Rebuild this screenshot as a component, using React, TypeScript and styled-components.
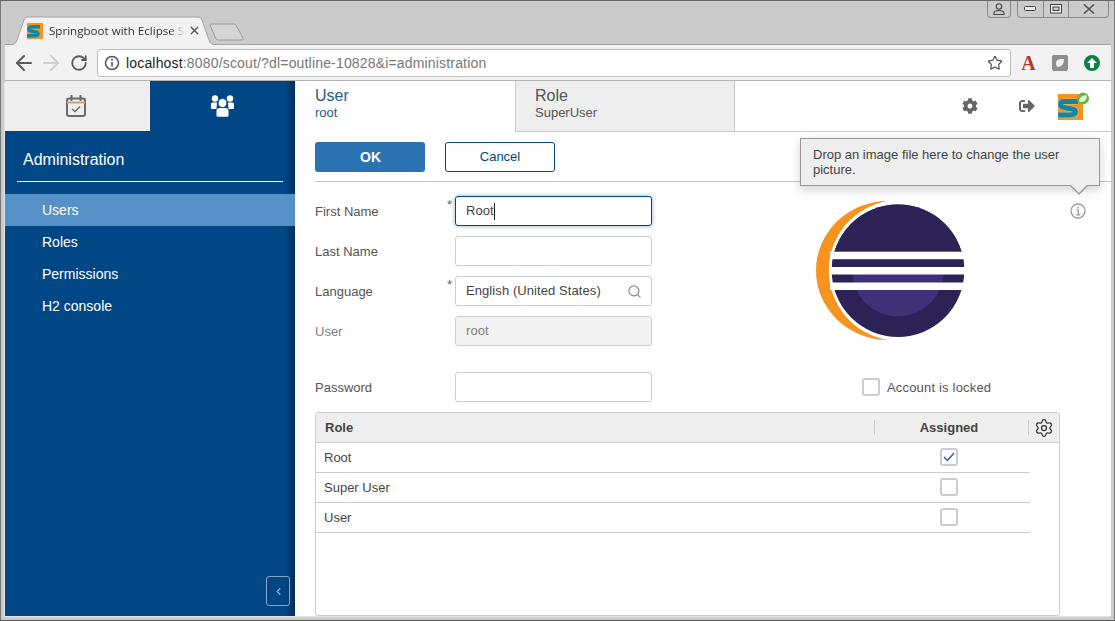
import React from "react";
import styled, { createGlobalStyle } from "styled-components";
import { ArrowLeft, ArrowRight, RotateCw, Search, Settings, Star, X, ChevronLeft } from "lucide-react";
import { FaCog, FaSignOutAlt } from "react-icons/fa";

const GlobalStyle = createGlobalStyle`
  html, body {
    margin: 0;
    padding: 0;
    height: 100%;
    overflow: hidden;
    background: #cbcbcb;
  }
  body {
    font-family: "Liberation Sans", Arial, sans-serif;
    font-size: 13px;
    color: #444;
  }
  * { box-sizing: border-box; }
`;

const SiteLogo = ({ size }: { size: number }) => (
  <svg width={size} height={size} viewBox="0 0 16 16">
    <rect width="16" height="16" fill="#f7941e" />
    <path d="M13 3.800H5C2.800 3.800 1.800 4.700 1.800 6 1.800 7.500 3 8 5 8.300 8.500 8.800 11 9 11 10.600 11 12 9.500 12.700 7.500 12.700H0" fill="none" stroke="#0d86a8" strokeWidth="3.500" />
  </svg>
);

const HeaderLogo = () => (
  <svg width="31" height="29" viewBox="0 0 31 29">
    <rect y="2" width="25" height="26" fill="#f7941e" />
    <path d="M20 9.500H7C3.500 9.500 2.500 10.800 2.500 12.400 2.500 14.500 4.500 15.200 8 15.800 13.500 16.700 17.500 17.200 17.500 19.800 17.500 22 15 23 12 23H0" fill="none" stroke="#fff" strokeWidth="6" opacity=".3" />
    <path d="M20 9.500H7C3.500 9.500 2.500 10.800 2.500 12.400 2.500 14.500 4.500 15.200 8 15.800 13.500 16.700 17.500 17.200 17.500 19.800 17.500 22 15 23 12 23H0" fill="none" stroke="#0d86a8" strokeWidth="5" />
    <circle cx="25" cy="6.500" r="6" fill="#6db33f" />
    <path d="M21.500 10C20.500 6 24 3 28.800 3.200 29 7.500 26 10.800 21.500 10Z" fill="#e6f2da" />
  </svg>
);

const CalendarIcon = () => (
  <svg width="20" height="22" viewBox="0 0 20 22" fill="none" stroke="#6b6b6b">
    <rect x="1" y="3.500" width="18" height="17.500" rx="2" strokeWidth="2" />
    <path d="M1 7.500H19" strokeWidth="2" stroke="#c8a880" />
    <path d="M5.500 1v4M14.500 1v4" strokeWidth="2.200" strokeLinecap="round" />
    <path d="M6 14l3 2.500L14 11.500" strokeWidth="1.400" />
  </svg>
);

const UsersIcon = () => (
  <svg width="23" height="22" viewBox="0 0 23 22" fill="#fff">
    <circle cx="4" cy="3.500" r="3.200" />
    <circle cx="19" cy="3.500" r="3.200" />
    <path d="M0 9C0 8 1 7.500 2 7.500H6L5.500 14H1C.4 14 0 13.500 0 13Z" />
    <path d="M23 9C23 8 22 7.500 21 7.500H17L17.500 14H22C22.600 14 23 13.500 23 13Z" />
    <circle cx="11.500" cy="8" r="4.500" stroke="#014786" strokeWidth="1" />
    <path d="M5.500 15.500C5.500 14 7 13 8.500 13H14.500C16 13 17.500 14 17.500 15.500V20.500C17.500 21.300 17 21.700 16 21.700H7C6 21.700 5.500 21.300 5.500 20.500Z" />
  </svg>
);

const EclipseLogo = () => (
  <svg width="152" height="142" viewBox="0 0 152 142">
    <defs>
      <clipPath id="eclipse-disc">
        <circle cx="83" cy="70.700" r="66.300" />
      </clipPath>
    </defs>
    <path d="M73 1A72 69.500 0 0 0 73 140A70.400 70.400 0 0 1 73 1Z" fill="#f7941e" />
    <circle cx="83" cy="70.700" r="66.300" fill="#2c2255" />
    <g clipPath="url(#eclipse-disc)">
      <circle cx="83" cy="71" r="45.500" fill="#3f3178" />
      <rect x="0" y="0" width="152" height="74" fill="#2c2255" />
    </g>
    <rect x="15" y="51.700" width="136" height="7.500" fill="#fff" />
    <rect x="15" y="67" width="136" height="7.500" fill="#fff" />
    <rect x="15" y="82.500" width="136" height="7.500" fill="#fff" />
  </svg>
);

const InfoIcon = () => (
  <svg width="16" height="16" viewBox="0 0 16 16" fill="none" stroke="#999">
    <circle cx="8" cy="8" r="7" strokeWidth="1.300" />
    <path d="M6.200 7H8.300V11.600M6 11.800H10.400" strokeWidth="1.200" />
    <circle cx="8" cy="4.700" r=".9" fill="#999" stroke="none" />
  </svg>
);

const PageInfoIcon = () => (
  <svg width="16" height="16" viewBox="0 0 16 16" fill="none" stroke="#555">
    <circle cx="8" cy="8" r="6.500" strokeWidth="1.500" />
    <path d="M8 7V11.500" strokeWidth="1.600" />
    <circle cx="8" cy="4.800" r="1" fill="#555" stroke="none" />
  </svg>
);

const App = () => {
  return (
    <>
      <GlobalStyle />
      <Window>
        <TitleBar>
          <ActiveTab>
            <TabShape width="206" height="29" viewBox="0 0 206 29">
              <path d="M0 29C4 29 6 27 7 24L14 4C15 1.500 16 1 19 1H187C190 1 191 1.500 192 4L199 24C200 27 202 29 206 29" fill="#f2f2f2" stroke="#a3a3a3" />
            </TabShape>
            <SiteLogo size={16} />
            <TabTitle>Springboot with Eclipse S</TabTitle>
            <X size={13} color="#555" strokeWidth={2.6} />
          </ActiveTab>
          <NewTab>
            <svg width="36" height="18" viewBox="0 0 36 18">
              <path d="M1 2C1 1.500 1.500 1 2 1H25C26 1 26.500 1.500 27 2L34 15C34.500 16.500 34 17 33 17H9C8 17 7.500 16.500 7 16Z" fill="#d4d4d4" stroke="#9a9a9a" />
            </svg>
          </NewTab>
          <WindowControls>
            <ProfileButton>
              <svg width="12" height="12" viewBox="0 0 12 12" fill="none" stroke="#444" strokeWidth="1.100">
                <circle cx="6" cy="3.500" r="2.700" />
                <path d="M1 11.500V10C1 8.500 3 7.500 6 7.500S11 8.500 11 10V11.500Z" />
              </svg>
            </ProfileButton>
            <ControlGroup>
              <ControlButton $width={25}>
                <svg width="13" height="6" viewBox="0 0 13 6" fill="#eee" stroke="#444">
                  <rect x=".5" y=".5" width="11" height="4" rx="1" />
                </svg>
              </ControlButton>
              <ControlButton $width={25}>
                <svg width="12" height="10" viewBox="0 0 12 10" fill="#eee" stroke="#444">
                  <rect x=".5" y=".5" width="11" height="8.500" />
                  <rect x="3" y="3" width="6" height="3.500" fill="#ccc" />
                </svg>
              </ControlButton>
              <ControlButton $width={40}>
                <svg width="12" height="10" viewBox="0 0 12 10" fill="none" stroke="#555" strokeWidth="1.600">
                  <path d="M1 .5L11 9.500M11 .5L1 9.500" />
                </svg>
              </ControlButton>
            </ControlGroup>
          </WindowControls>
        </TitleBar>

        <Toolbar>
          <ArrowLeft size={24} color="#5a5a5a" strokeWidth={2} />
          <ArrowRight size={24} color="#cfcfcf" strokeWidth={2} />
          <ReloadIcon size={18} color="#5a5a5a" strokeWidth={2.4} />
          <AddressBar>
            <PageInfoIcon />
            <Url>
              <b>localhost</b>:8080/scout/?dl=outline-10828&amp;i=administration
            </Url>
            <Star size={16} color="#555" strokeWidth={1.8} />
          </AddressBar>
          <Extensions>
            <AcrobatGlyph>A</AcrobatGlyph>
            <ShieldTile>
              <svg width="10" height="10" viewBox="0 0 10 10">
                <path d="M1 5C1 2 4 .5 9 1 9 5 7 9 3 9 1.500 9 1 7 1 5Z" fill="#f2f2f2" />
              </svg>
            </ShieldTile>
            <UpdateBadge>
              <svg width="10" height="10" viewBox="0 0 10 10">
                <path d="M5 0L10 5H7V10H3V5H0Z" fill="#fff" />
              </svg>
            </UpdateBadge>
          </Extensions>
        </Toolbar>

        <AppArea>
          <Sidebar>
            <SideTabs>
              <SideTab>
                <CalendarIcon />
              </SideTab>
              <SideTab $active>
                <UsersIcon />
              </SideTab>
            </SideTabs>
            <SideTitle>Administration</SideTitle>
            <SideMenu>
              <SideItem $selected>Users</SideItem>
              <SideItem>Roles</SideItem>
              <SideItem>Permissions</SideItem>
              <SideItem>H2 console</SideItem>
            </SideMenu>
            <SideFooter>
              <CollapseButton>
                <ChevronLeft size={11} color="#7fb4dc" strokeWidth={3} />
              </CollapseButton>
            </SideFooter>
          </Sidebar>

          <Main>
            <ViewTabs>
              <ViewTab $active>
                <ViewTabTitle>User</ViewTabTitle>
                <ViewTabSub>root</ViewTabSub>
              </ViewTab>
              <ViewTab>
                <ViewTabTitle>Role</ViewTabTitle>
                <ViewTabSub>SuperUser</ViewTabSub>
              </ViewTab>
              <HeaderTools>
                <FaCog size={16} color="#666" />
                <FaSignOutAlt size={16} color="#666" />
                <HeaderLogo />
              </HeaderTools>
            </ViewTabs>

            <Content>
              <ButtonBar>
                <PrimaryButton>OK</PrimaryButton>
                <SecondaryButton>Cancel</SecondaryButton>
              </ButtonBar>

              <FormArea>
                <FieldColumn>
                  <FieldRow>
                    <FieldLabel $mandatory>First Name</FieldLabel>
                    <TextInput $focused>
                      Root
                      <Caret />
                    </TextInput>
                  </FieldRow>
                  <FieldRow>
                    <FieldLabel>Last Name</FieldLabel>
                    <TextInput />
                  </FieldRow>
                  <FieldRow>
                    <FieldLabel $mandatory>Language</FieldLabel>
                    <TextInput>
                      English (United States)
                      <SearchSlot>
                        <Search size={15} color="#888" strokeWidth={2} />
                      </SearchSlot>
                    </TextInput>
                  </FieldRow>
                  <FieldRow>
                    <FieldLabel $muted>User</FieldLabel>
                    <TextInput $disabled>root</TextInput>
                  </FieldRow>
                  <PasswordRow>
                    <FieldLabel>Password</FieldLabel>
                    <TextInput />
                  </PasswordRow>
                </FieldColumn>

                <PictureColumn>
                  <PictureRow>
                    <EclipseLogo />
                    <InfoSlot>
                      <InfoIcon />
                    </InfoSlot>
                  </PictureRow>
                  <LockedRow>
                    <CheckBox />
                    <span>Account is locked</span>
                  </LockedRow>
                </PictureColumn>
              </FormArea>

              <RoleTable>
                <TableHeader>
                  <RoleHeaderCell>Role</RoleHeaderCell>
                  <AssignedHeaderCell>Assigned</AssignedHeaderCell>
                  <TableMenuCell>
                    <Settings size={20} color="#333" strokeWidth={1.5} />
                  </TableMenuCell>
                </TableHeader>
                <TableRow>
                  <RoleCell>Root</RoleCell>
                  <AssignedCell>
                    <CheckBox>
                      <svg width="12" height="10" viewBox="0 0 12 10" fill="none" stroke="#2d5f96" strokeWidth="1.500">
                        <path d="M1 5L4.500 8.500 11 1" />
                      </svg>
                    </CheckBox>
                  </AssignedCell>
                </TableRow>
                <TableRow>
                  <RoleCell>Super User</RoleCell>
                  <AssignedCell>
                    <CheckBox />
                  </AssignedCell>
                </TableRow>
                <TableRow>
                  <RoleCell>User</RoleCell>
                  <AssignedCell>
                    <CheckBox />
                  </AssignedCell>
                </TableRow>
              </RoleTable>
            </Content>

            <Tooltip>Drop an image file here to change the user picture.</Tooltip>
          </Main>
        </AppArea>
      </Window>
    </>
  );
};

export default App;

const Window = styled.div`
  width: 1115px;
  height: 621px;
  display: flex;
  flex-direction: column;
  padding: 0 3px 4px 4px;
  background: #cbcbcb;
  border: 1px solid #555;
  border-color: #666 #777 #555 #777;
  overflow: hidden;
`;

const TitleBar = styled.div`
  position: relative;
  height: 43px;
  flex: none;
  display: flex;
  align-items: flex-end;
  padding-left: 5px;
`;

const ActiveTab = styled.div`
  position: relative;
  width: 206px;
  height: 29px;
  display: flex;
  align-items: center;
  padding: 0 15px 0 17px;
  gap: 6px;
  z-index: 1;
  margin-bottom: -1px;

  > svg:not(:first-child) {
    position: relative;
    flex: none;
  }
`;

const TabShape = styled.svg`
  position: absolute;
  left: 0;
  top: 0;
`;

const TabTitle = styled.span`
  position: relative;
  flex: 1;
  min-width: 0;
  margin-right: -4px;
  white-space: nowrap;
  font-family: "Open Sans", "Noto Sans", sans-serif;
  font-size: 11.6px;
  color: #333;
  -webkit-mask-image: linear-gradient(to right, #000 88%, transparent 99%);
  mask-image: linear-gradient(to right, #000 88%, transparent 99%);
`;

const NewTab = styled.div`
  margin-left: -7px;
  margin-bottom: 3px;
  height: 18px;
  display: flex;
`;

const WindowControls = styled.div`
  position: absolute;
  top: 0;
  right: 2px;
  display: flex;
  gap: 6px;
`;

const ProfileButton = styled.div`
  width: 24px;
  height: 17px;
  display: flex;
  align-items: center;
  justify-content: center;
  border: 1px solid #8a8a8a;
  border-top: none;
  border-radius: 0 0 4px 4px;
`;

const ControlGroup = styled.div`
  height: 17px;
  display: flex;
  border: 1px solid #8a8a8a;
  border-top: none;
  border-radius: 0 0 4px 4px;
`;

const ControlButton = styled.div<{ $width: number }>`
  width: ${({ $width }) => $width}px;
  display: flex;
  align-items: center;
  justify-content: center;

  & + & {
    border-left: 1px solid #8a8a8a;
  }
`;

const Toolbar = styled.div`
  height: 37px;
  flex: none;
  display: flex;
  align-items: center;
  background: #f2f2f2;
  border-top: 1px solid #a3a3a3;
  border-bottom: 1px solid #b3b3b3;
  padding: 0 5px 0 7px;
  gap: 3px;
`;

const ReloadIcon = styled(RotateCw)`
  margin: 0 6px 0 4px;
  flex: none;
`;

const AddressBar = styled.div`
  flex: 1;
  height: 28px;
  display: flex;
  align-items: center;
  gap: 6px;
  padding: 0 7px 0 6px;
  background: #fff;
  border: 1px solid #bdbdbd;
  border-radius: 3px;
`;

const Url = styled.div`
  flex: 1;
  font-size: 14px;
  letter-spacing: 0.17px;
  color: #777;
  white-space: nowrap;

  b {
    font-weight: normal;
    color: #222;
  }
`;

const Extensions = styled.div`
  display: flex;
  align-items: center;
  gap: 16px;
  margin-left: 6px;
  margin-right: 6px;
`;

const AcrobatGlyph = styled.span`
  width: 17px;
  margin-right: -1px;
  text-align: center;
  font-family: "Liberation Serif", serif;
  font-weight: bold;
  font-size: 20px;
  line-height: 20px;
  color: #b03a2a;
`;

const ShieldTile = styled.div`
  width: 16px;
  height: 16px;
  display: flex;
  align-items: center;
  justify-content: center;
  border-radius: 2px;
  background: #8e8e8e;
`;

const UpdateBadge = styled.div`
  width: 16px;
  height: 16px;
  display: flex;
  align-items: center;
  justify-content: center;
  border-radius: 50%;
  background: #0b8043;
`;

const AppArea = styled.div`
  flex: 1;
  min-height: 0;
  display: flex;
  background: #fff;
  box-shadow: -1px 1px 0 #e8e8e8;
`;

const Sidebar = styled.div`
  position: relative;
  width: 290px;
  flex: none;
  display: flex;
  flex-direction: column;
  background: linear-gradient(to right, #014786 96.5%, #012d55 100%);
`;

const SideTabs = styled.div`
  height: 50px;
  flex: none;
  display: flex;
`;

const SideTab = styled.div<{ $active?: boolean }>`
  width: 145px;
  display: flex;
  align-items: center;
  justify-content: center;
  padding-right: ${({ $active }) => ($active ? "0" : "3px")};
  background: ${({ $active }) => ($active ? "transparent" : "#eeeeee")};
`;

const SideTitle = styled.div`
  margin: 0 12px;
  height: 51px;
  padding: 20px 6px 0;
  font-size: 16px;
  color: #fff;
  border-bottom: 1px solid #fff;
`;

const SideMenu = styled.div`
  margin-top: 12px;
  display: flex;
  flex-direction: column;
`;

const SideItem = styled.div<{ $selected?: boolean }>`
  height: 32px;
  line-height: 32px;
  padding-left: 37px;
  font-size: 14px;
  color: #fff;
  background: ${({ $selected }) => ($selected ? "#5591c7" : "transparent")};
`;

const SideFooter = styled.div`
  margin-top: auto;
  display: flex;
  justify-content: flex-end;
  padding: 0 5px 10px 0;
`;

const CollapseButton = styled.div`
  width: 24px;
  height: 30px;
  display: flex;
  align-items: center;
  justify-content: center;
  border: 1px solid #8ba6c4;
  border-radius: 3px;
`;

const Main = styled.div`
  position: relative;
  flex: 1;
  min-width: 0;
  display: flex;
  flex-direction: column;
`;

const ViewTabs = styled.div`
  height: 51px;
  flex: none;
  display: flex;
`;

const ViewTab = styled.div<{ $active?: boolean }>`
  width: 220px;
  padding: 6px 20px 0;
  padding-left: ${({ $active }) => ($active ? "20px" : "19px")};
  color: ${({ $active }) => ($active ? "#245a8c" : "#555")};
  background: ${({ $active }) => ($active ? "#fff" : "#eeeeee")};
  border-bottom: 1px solid ${({ $active }) => ($active ? "transparent" : "#c8c8c8")};
  border-left: ${({ $active }) => ($active ? "none" : "1px solid #c8c8c8")};
  border-right: ${({ $active }) => ($active ? "none" : "1px solid #c8c8c8")};
`;

const ViewTabTitle = styled.div`
  font-size: 16px;
  line-height: 17px;
`;

const ViewTabSub = styled.div`
  font-size: 13px;
  line-height: 18px;
`;

const HeaderTools = styled.div`
  flex: 1;
  display: flex;
  align-items: center;
  justify-content: flex-end;
  gap: 41px;
  padding-right: 22px;
  border-bottom: 1px solid #c8c8c8;

  > svg:last-child {
    margin-left: -18px;
  }
`;

const Content = styled.div`
  flex: 1;
  min-height: 0;
  display: flex;
  flex-direction: column;
  padding-left: 20px;
`;

const ButtonBar = styled.div`
  height: 50px;
  flex: none;
  display: flex;
  gap: 20px;
  padding-top: 10px;
  border-bottom: 1px solid #c8c8c8;
`;

const PrimaryButton = styled.div`
  width: 110px;
  height: 30px;
  line-height: 30px;
  padding-left: 1px;
  text-align: center;
  border-radius: 3px;
  font-size: 14px;
  font-weight: bold;
  color: #fff;
  background: #2b72b2;
`;

const SecondaryButton = styled.div`
  width: 110px;
  height: 30px;
  line-height: 28px;
  text-align: center;
  border: 1px solid #014786;
  border-radius: 3px;
  font-size: 13px;
  color: #014786;
  background: #fff;
`;

const FormArea = styled.div`
  display: flex;
  padding-top: 14px;
  height: 230px;
  flex: none;
`;

const FieldColumn = styled.div`
  width: 337px;
  flex: none;
  display: flex;
  flex-direction: column;
  gap: 10px;
`;

const FieldRow = styled.div`
  display: flex;
  align-items: center;
  height: 30px;
`;

const PasswordRow = styled(FieldRow)`
  margin-top: 16px;
`;

const FieldLabel = styled.label<{ $mandatory?: boolean; $muted?: boolean }>`
  position: relative;
  width: 140px;
  flex: none;
  font-size: 13px;
  color: ${({ $muted }) => ($muted ? "#808080" : "#555")};

  &::after {
    content: ${({ $mandatory }) => ($mandatory ? '"*"' : "none")};
    position: absolute;
    top: -7px;
    right: 3px;
    font-size: 13px;
    color: #666;
  }
`;

const TextInput = styled.div<{ $focused?: boolean; $disabled?: boolean }>`
  position: relative;
  width: 197px;
  height: 30px;
  line-height: 28px;
  padding: 0 10px;
  display: flex;
  align-items: center;
  font-size: 13px;
  letter-spacing: 0.08px;
  color: ${({ $disabled }) => ($disabled ? "#808080" : "#444")};
  background: ${({ $disabled }) => ($disabled ? "#f2f2f2" : "#fff")};
  border: 1px solid ${({ $focused }) => ($focused ? "#014786" : "#cccccc")};
  border-radius: 3px;
  box-shadow: ${({ $focused }) => ($focused ? "0 0 4px rgba(1, 71, 134, 0.45)" : "none")};
`;

const Caret = styled.span`
  width: 1px;
  height: 17px;
  background: #222;
`;

const SearchSlot = styled.span`
  margin-left: auto;
  margin-right: -1px;
  display: flex;
`;

const PictureColumn = styled.div`
  flex: 1;
  display: flex;
  flex-direction: column;
`;

const PictureRow = styled.div`
  display: flex;
  justify-content: space-between;
  align-items: flex-start;
  padding: 4px 25px 0 163px;
`;

const InfoSlot = styled.div`
  display: flex;
  margin-top: 3px;
`;

const LockedRow = styled.div`
  display: flex;
  align-items: center;
  gap: 7px;
  margin: 36px 0 0 210px;
  font-size: 13px;
  letter-spacing: 0.18px;
  color: #555;
`;

const CheckBox = styled.div`
  width: 18px;
  height: 18px;
  flex: none;
  display: flex;
  align-items: center;
  justify-content: center;
  background: #fff;
  border: 2px solid #cccccc;
  border-radius: 3px;
`;

const RoleTable = styled.div`
  flex: 1;
  width: 745px;
  min-height: 0;
  border: 1px solid #cccccc;
  border-radius: 3px;
`;

const TableHeader = styled.div`
  height: 30px;
  display: flex;
  align-items: center;
  background: #eeeeee;
  border-bottom: 1px solid #cccccc;
  font-size: 13px;
  font-weight: bold;
  color: #444;
`;

const RoleHeaderCell = styled.div`
  width: 559px;
  padding-left: 9px;
  line-height: 15px;
  border-right: 1px solid #cccccc;
`;

const AssignedHeaderCell = styled.div`
  width: 154px;
  padding-right: 5px;
  text-align: center;
  line-height: 15px;
  border-right: 1px solid #cccccc;
`;

const TableMenuCell = styled.div`
  flex: 1;
  display: flex;
  justify-content: center;
`;

const TableRow = styled.div`
  width: 714px;
  height: 30px;
  display: flex;
  align-items: center;
  border-bottom: 1px solid #cccccc;
`;

const RoleCell = styled.div`
  width: 559px;
  padding-left: 8px;
  font-size: 13px;
  color: #444;
`;

const AssignedCell = styled.div`
  width: 149px;
  display: flex;
  justify-content: center;
  padding-right: 2px;
  margin-bottom: 1px;
`;

const Tooltip = styled.div`
  position: absolute;
  top: 57px;
  left: 505px;
  width: 300px;
  height: 48px;
  padding: 8px 12px 0;
  line-height: 15px;
  font-size: 13px;
  color: #444;
  background: #eeeeee;
  border: 1px solid #999;
  box-shadow: 0 4px 10px rgba(0, 0, 0, 0.18);

  &::before {
    content: "";
    position: absolute;
    right: 11px;
    bottom: -10px;
    width: 0;
    height: 0;
    border-left: 9px solid transparent;
    border-right: 9px solid transparent;
    border-top: 9px solid #999;
  }

  &::after {
    content: "";
    position: absolute;
    right: 12px;
    bottom: -8px;
    width: 0;
    height: 0;
    border-left: 8px solid transparent;
    border-right: 8px solid transparent;
    border-top: 8px solid #eeeeee;
  }
`;
